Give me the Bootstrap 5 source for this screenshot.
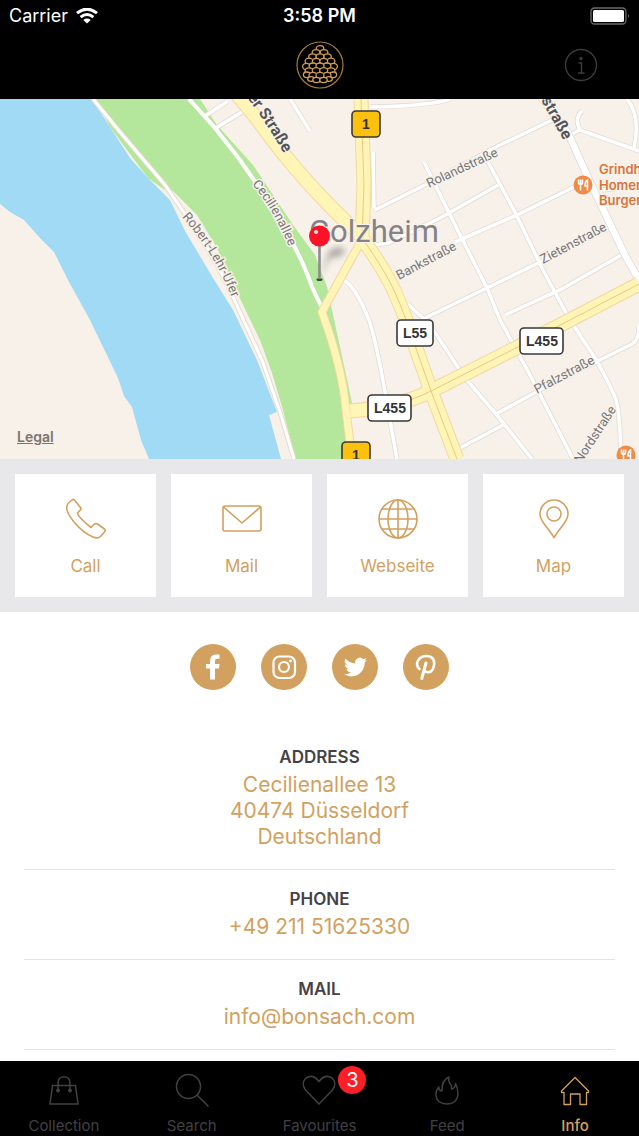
<!DOCTYPE html>
<html lang="en">
<head>
<meta charset="utf-8">
<meta name="viewport" content="width=device-width, initial-scale=1">
<title>Info</title>
<link href="https://cdn.jsdelivr.net/npm/bootstrap@5.3.0/dist/css/bootstrap.min.css" rel="stylesheet">
<style>
  :root { --gold: #d2a15f; --gold-line: #b98a49; --dim: #414044; }
  body { font-family: Inter, "Liberation Sans", sans-serif; }
  svg { display: block; }
  .status-bar { height: 32px; padding: 0 9px; font-size: 18px; line-height: 32px; }
  .status-bar > div, .title-bar > div { flex: 1 1 0; }
  .title-bar { height: 67px; padding: 0 41px 2px; }
  .plain-btn { background: none; border: 0; padding: 0; }
  .map-view .road-label { font: 13px Roboto, sans-serif; fill: #77757a; stroke: #f7f3ea; stroke-width: 3px; paint-order: stroke; }
  .map-view .major-label { font: bold 16px Roboto, sans-serif; fill: #555358; stroke: #f7f3ea; stroke-width: 2px; paint-order: stroke; }
  .map-view .district { font: 31px Roboto, sans-serif; fill: #858287; stroke: #f7f3ea; stroke-width: 2px; paint-order: stroke; }
  .map-view .poi { font: 600 13px Inter, sans-serif; fill: #d9753c; stroke: #f7f3ea; stroke-width: 2px; paint-order: stroke; }
  .map-view .shield { font: bold 14px "Liberation Sans Narrow", "Liberation Sans", sans-serif; fill: #333; text-anchor: middle; }
  .legal-link { left: 17px; bottom: 12px; font-size: 14px; line-height: 20px; font-weight: 600; color: #7b7570; }
  .action-strip { background: #e8e7e9; padding: 15px; gap: 15px; }
  .action-tile { flex: 1 1 0; height: 123px; background: #fff; color: var(--gold); text-decoration: none; font-size: 17px; line-height: 24px; padding-top: 24px; gap: 14px; }
  .social-row { gap: 25px; padding-top: 32px; padding-bottom: 55px; }
  .social-link { width: 46px; height: 46px; background: var(--gold); }
  .detail-list { padding: 0 24px 11px; }
  .detail { border-bottom: 1px solid #e3e2e5; padding: 17px 0 19px; }
  .detail:first-child { padding-top: 0; }
  .detail h2 { font-size: 17px; line-height: 24px; font-weight: 600; color: #444247; margin: 0 0 3px; }
  .detail address, .detail a { font-size: 21px; line-height: 26px; color: var(--gold); text-decoration: none; margin: 0; }
  .detail a { display: block; }
  .tab-strip { background: #000; height: 76px; }
  .tab-item { flex: 1 1 0; color: var(--dim); text-decoration: none; font-size: 15px; line-height: 20px; padding-top: 10px; gap: 5px; }
  .tab-item.current { color: var(--gold); font-weight: 500; }
  .count-dot { top: -5px; left: 39px; width: 28px; height: 28px; background: #fb1f28; font-size: 20px; line-height: 28px; }
</style>
</head>
<body class="d-flex flex-column min-vh-100 bg-white">

<header class="bg-black text-white">
  <div class="status-bar d-flex align-items-center">
    <div class="d-flex align-items-center gap-2">
      <span>Carrier</span>
      <svg width="22" height="16" viewBox="0 0 22 16" aria-hidden="true"><g fill="none" stroke="#fff" stroke-width="3"><path d="M1 5.2Q11-2.9 21 5.2"/><path d="M4.600 9.100Q11 4 17.400 9.100"/></g><path fill="#fff" d="M7.300 11.900Q11 9.200 14.700 11.900L11 15.500z"/></svg>
    </div>
    <div class="text-center fw-semibold">3:58 PM</div>
    <div class="d-flex justify-content-end">
      <svg width="40" height="18" viewBox="0 0 40 18" aria-hidden="true"><rect x="1" y="1" width="35" height="16" rx="3.500" fill="none" stroke="#6b6b6d" stroke-width="1.300"/><rect x="3" y="3" width="31" height="12" rx="1.500" fill="#fff"/><path d="M38 6.500v5q1.800-2.500 0-5" fill="#777"/></svg>
    </div>
  </div>
  <div class="title-bar d-flex align-items-center">
    <div></div>
    <svg width="48" height="48" viewBox="0 0 48 48" role="img" aria-label="Pine cone logo">
      <circle cx="24" cy="24" r="23" fill="none" stroke="#a57b3d" stroke-width="1.200"/>
      <g fill="#000" stroke="#d09d55" stroke-width="1.300">
        <ellipse cx="24" cy="7.500" rx="3.800" ry="2.800"/>
        <ellipse cx="20" cy="11.500" rx="3.800" ry="2.900"/><ellipse cx="28" cy="11.500" rx="3.800" ry="2.900"/>
        <ellipse cx="16.500" cy="15.800" rx="3.800" ry="3"/><ellipse cx="31.500" cy="15.800" rx="3.800" ry="3"/><ellipse cx="24" cy="15.800" rx="3.900" ry="3"/>
        <ellipse cx="13" cy="20.300" rx="3.900" ry="3.100"/><ellipse cx="35" cy="20.300" rx="3.900" ry="3.100"/><ellipse cx="20.300" cy="20.300" rx="3.900" ry="3"/><ellipse cx="27.700" cy="20.300" rx="3.900" ry="3"/>
        <ellipse cx="10.500" cy="25.500" rx="3.900" ry="3.200"/><ellipse cx="37.500" cy="25.500" rx="3.900" ry="3.200"/><ellipse cx="17" cy="25" rx="3.900" ry="3"/><ellipse cx="31" cy="25" rx="3.900" ry="3"/><ellipse cx="24" cy="25" rx="4" ry="3"/>
        <ellipse cx="13" cy="29.800" rx="3.900" ry="3"/><ellipse cx="35" cy="29.800" rx="3.900" ry="3"/><ellipse cx="20.300" cy="29.600" rx="4" ry="3"/><ellipse cx="27.700" cy="29.600" rx="4" ry="3"/>
        <ellipse cx="10.800" cy="33.800" rx="3.400" ry="2.800"/><ellipse cx="37.200" cy="33.800" rx="3.400" ry="2.800"/><ellipse cx="17" cy="34.300" rx="3.900" ry="3"/><ellipse cx="31" cy="34.300" rx="3.900" ry="3"/><ellipse cx="24" cy="34.300" rx="4" ry="3"/>
        <ellipse cx="15" cy="38" rx="3.300" ry="2.300"/><ellipse cx="33" cy="38" rx="3.300" ry="2.300"/><ellipse cx="20.500" cy="39" rx="3.700" ry="2.600"/><ellipse cx="27.500" cy="39" rx="3.700" ry="2.600"/>
      </g>
    </svg>
    <div class="d-flex justify-content-end">
      <button class="plain-btn" type="button" aria-label="Information">
        <svg width="34" height="34" viewBox="0 0 34 34" fill="none" stroke="#3d3b3e" stroke-width="1.400"><circle cx="17" cy="17" r="15.500"/><circle cx="17" cy="10.500" r="1" fill="#3d3b3e"/><path d="M14.500 15h3v10M14 25h6.500"/></svg>
      </button>
    </div>
  </div>
</header>

<main class="flex-grow-1">
  <section class="map-view position-relative" aria-label="Map">
    <svg class="w-100 h-auto" viewBox="0 99 639 360">
      <defs>
        <path id="minor" d="M375 210L425 185 500 145 552 120M375 245L388 243 440 218 500 184M424 162L455 225 487 288 500 320 530 375 573 459M488 162L516 214 543 270 570 320 595 358Q612 388 616 400T621 459M455 242L517 215 590 179M425 318L487 288 600 233M505 315L560 290 625 253M408 304L430 325 465 378 496 414 532 459M343 280Q355 285 369 320C379 350 386 400 397 459M460 448L503 425M496 414L540 390 632 344Q639 340 639 326M373 152L374 208M370 107Q430 106 450 99M205 116L228 101M216 128L250 107M290 99L310 131M570 135L580 130 639 151M580 130Q574 118 582 111M627 99Q641 116 634 148M603 190L620 188"/>
        <path id="yellow" d="M361 99L364 185 362 238M362 238C388 275 395 290 406 320L431 391 457 459M236 93L258 120Q300 180 361 236M350 411Q400 407 431 391L520 346 639 284"/>
        <path id="shore" d="M364 236L345 270 322 312Q343 370 346 411L352 459"/>
        <path id="l-robert" d="M182 217Q219 258 237 312"/>
        <path id="l-cec" d="M252 184Q276 213 291 252"/>
        <path id="l-left" d="M247 98Q268 124 292 168"/>
        <path id="l-right" d="M541 100L569 150"/>
      </defs>
      <rect y="99" width="639" height="360" fill="#f7f1e9"/>
      <path fill="#a0daf4" d="M0 99H92L110 127 130 158 148 178 170 200 185 231 213 278 233 310 257 360 277 412 269 415 281 459H149L141 440 132 407 124 396 118 378 90 320 68 280 54 252 40 238 24 220 10 212 0 204z"/>
      <path fill="#b4e69c" d="M95 99H200L217 125 253 165 293 225 315 255 327 287 340 347 352 403 347 459H295L283 410 272 373 260 340 235 288 217 248 197 215 173 191 165 190 148 178 130 154 110 127z"/>
      <use href="#minor" fill="none" stroke="#dedad5" stroke-width="5"/>
      <use href="#minor" fill="none" stroke="#fff" stroke-width="3.600"/>
      <path d="M93 99L120 132 165 185 187 217Q220 265 238 308L262 360 280 412 294 459" fill="none" stroke="#e6dcd0" stroke-width="5"/>
      <path d="M93 99L120 132 165 185 187 217Q220 265 238 308L262 360 280 412 294 459" fill="none" stroke="#fff" stroke-width="3"/>
      <path d="M189 99L215 128 240 160 256 183Q298 245 312 287L321 306" fill="none" stroke="#fff" stroke-width="4"/>
      <path d="M538 93L568 133 590 182 625 255 640 282" fill="none" stroke="#dedad5" stroke-width="8"/>
      <path d="M538 93L568 133 590 182 625 255 640 282" fill="none" stroke="#fff" stroke-width="6.500"/>
      <g fill="none"><use href="#yellow" stroke="#f3d8a0" stroke-width="15"/><use href="#shore" stroke="#f3d8a0" stroke-width="9"/><use href="#yellow" stroke="#fff5b6" stroke-width="13"/><use href="#shore" stroke="#fff5b6" stroke-width="7"/></g>
      <path d="M361 99L364 185 362 238M362 238C388 275 395 290 406 320L431 391 457 459M380 408Q410 402 431 391L520 346 639 284" fill="none" stroke="#f1c77e" stroke-width="1"/>

      <text class="district" x="309" y="242">Golzheim</text>
      <text class="road-label" transform="rotate(-25 429 188)" x="429" y="188">Rolandstraße</text>
      <text class="road-label" transform="rotate(-28 399 280)" x="399" y="280">Bankstraße</text>
      <text class="road-label" transform="rotate(-28 543 264)" x="543" y="264">Zietenstraße</text>
      <text class="road-label" transform="rotate(-28 537 394)" x="537" y="394">Pfalzstraße</text>
      <text class="road-label" transform="rotate(-57 581 464)" x="581" y="464">Nordstraße</text>
      <text class="road-label"><textPath href="#l-robert">Robert-Lehr-Ufer</textPath></text>
      <text class="road-label"><textPath href="#l-cec">Cecilienallee</textPath></text>
      <text class="major-label"><textPath href="#l-left">er Straße</textPath></text>
      <text class="major-label"><textPath href="#l-right">straße</textPath></text>
      <text class="poi" x="599" y="174">Grindhouse</text>
      <text class="poi" x="599" y="190">Homemade</text>
      <text class="poi" x="599" y="205">Burgers</text>
      <g id="food"><circle cx="583" cy="185" r="9.500" fill="#f08b48"/><path d="M578.500 179.500v3q0 2 2 2t2-2v-3M580.500 179.500V190.500M587.500 190.500V180q-2.500 1.500-2.500 6h2.500" fill="none" stroke="#fff" stroke-width="1.500"/></g>
      <use href="#food" x="43" y="270"/>

      <g stroke="#3a3838" stroke-width="1.600">
        <rect x="352" y="111" width="28" height="26" rx="4" fill="#fcc00f"/><rect x="342" y="442" width="28" height="26" rx="4" fill="#fcc00f"/>
        <rect x="397" y="320" width="36" height="26" rx="4" fill="#fff"/><rect x="520" y="328" width="43" height="26" rx="4" fill="#fff"/><rect x="368" y="395" width="43" height="26" rx="4" fill="#fff"/>
      </g>
      <text class="shield" x="366" y="129">1</text>
      <text class="shield" x="356" y="460">1</text>
      <text class="shield" x="415" y="338">L55</text>
      <text class="shield" x="542" y="346">L455</text>
      <text class="shield" x="390" y="413">L455</text>

      <defs><filter id="soft"><feGaussianBlur stdDeviation="3"/></filter></defs>
      <path d="M320 278L328 253Q335 244 345 249 344 258 330 258z" fill="#555" opacity=".45" filter="url(#soft)"/>
      <ellipse cx="319.500" cy="279.500" rx="3" ry="1.500" fill="#3f4a3a"/>
      <path d="M319.500 244V279" stroke="#8d8d90" stroke-width="2.600"/>
      <circle cx="319.500" cy="236" r="10.500" fill="#fb1428"/><circle cx="316" cy="232" r="2" fill="#ffe6e6"/>
    </svg>
    <a class="legal-link position-absolute" href="#legal">Legal</a>
  </section>

  <nav class="action-strip d-flex" aria-label="Contact">
    <a class="action-tile d-flex flex-column align-items-center" href="tel:+4921151625330">
      <svg width="42" height="42" viewBox="0 0 42 42" fill="none" stroke="currentColor" stroke-width="1.600" stroke-linejoin="round"><path d="M9 1.500L15.500 9.500Q16.500 11 15 12.300L12.500 15Q12.500 17 17 21.500T26 29.500L29.500 26Q31 25 32.500 26L39.500 31Q41 32.500 39.500 34L35.500 38.500Q33 41 28 39Q17.500 34.500 9 24T2 8.500Q2 6.500 3.500 5L7 2Q8 1 9 1.500z"/></svg>
      <span>Call</span></a>
    <a class="action-tile d-flex flex-column align-items-center" href="mailto:info@bonsach.com">
      <svg width="42" height="42" viewBox="0 0 42 42" fill="none" stroke="currentColor" stroke-width="1.600" stroke-linejoin="round"><rect x="2" y="8" width="38" height="25" rx="2"/><path d="M2.500 9L21 25 39.500 9"/></svg>
      <span>Mail</span></a>
    <a class="action-tile d-flex flex-column align-items-center" href="#web">
      <svg width="42" height="42" viewBox="0 0 42 42" fill="none" stroke="currentColor" stroke-width="1.600"><circle cx="21" cy="21" r="19"/><ellipse cx="21" cy="21" rx="10" ry="19"/><path d="M21 2V40M2 21H40M5 11H37M5 31H37"/></svg>
      <span>Webseite</span></a>
    <a class="action-tile d-flex flex-column align-items-center" href="#map">
      <svg width="42" height="42" viewBox="0 0 42 42" fill="none" stroke="currentColor" stroke-width="1.600"><path d="M21 39.500Q17.500 34 13.500 29Q7 21 7 16A14 14 0 0 1 35 16Q35 21 28.500 29Q24.500 34 21 39.500z"/><circle cx="21" cy="16" r="7"/></svg>
      <span>Map</span></a>
  </nav>

  <div class="social-row d-flex justify-content-center">
    <a class="social-link rounded-circle" href="#facebook" aria-label="Facebook"><svg width="46" height="46" viewBox="0 0 46 46"><path fill="#fff" d="M20 35.500V24.500H16V20H20V17Q20 10.500 26 10.500H29.500V14.800H27Q25 14.800 25 17V20H29.500L29 24.500H25V35.500z"/></svg></a>
    <a class="social-link rounded-circle" href="#instagram" aria-label="Instagram"><svg width="46" height="46" viewBox="0 0 46 46" fill="none" stroke="#fff" stroke-width="2.200"><rect x="12.500" y="12.500" width="21.500" height="21.500" rx="6"/><circle cx="23" cy="23" r="5"/><circle cx="29.500" cy="17" r="1.400" fill="#fff" stroke="none"/></svg></a>
    <a class="social-link rounded-circle" href="#twitter" aria-label="Twitter"><svg width="46" height="46" viewBox="0 0 46 46"><path fill="#fff" transform="translate(12 11.500) scale(.96)" d="M23.950 4.570a10 10 0 0 1-2.820.77 4.960 4.960 0 0 0 2.160-2.720 9.900 9.900 0 0 1-3.120 1.190 4.920 4.920 0 0 0-8.380 4.480A13.930 13.930 0 0 1 1.640 3.160a4.920 4.920 0 0 0 1.520 6.570 4.900 4.900 0 0 1-2.230-.61v.06a4.920 4.920 0 0 0 3.950 4.830 5 5 0 0 1-2.210.08 4.940 4.940 0 0 0 4.600 3.420A9.870 9.870 0 0 1 0 19.540a13.990 13.990 0 0 0 7.550 2.210c9.050 0 14-7.500 14-13.980 0-.21 0-.42-.02-.63a9.940 9.940 0 0 0 2.460-2.550z"/></svg></a>
    <a class="social-link rounded-circle" href="#pinterest" aria-label="Pinterest"><svg width="46" height="46" viewBox="0 0 46 46" fill="none" stroke="#fff" stroke-width="2.600" stroke-linecap="round"><path d="M16.500 25Q12.500 21.500 15 16.500Q18 11.800 24 12Q31 12.500 31.200 19Q31 27.500 25.500 28.300Q22.500 28.500 21.300 26"/><path d="M23 19L18.800 34.500" stroke-width="3"/></svg></a>
  </div>

  <div class="detail-list text-center">
    <section class="detail"><h2>ADDRESS</h2><address>Cecilienallee 13<br>40474 Düsseldorf<br>Deutschland</address></section>
    <section class="detail"><h2>PHONE</h2><a href="tel:+4921151625330">+49 211 51625330</a></section>
    <section class="detail"><h2>MAIL</h2><a href="mailto:info@bonsach.com">info@bonsach.com</a></section>
  </div>
</main>

<nav class="tab-strip d-flex sticky-bottom" aria-label="Main">
  <a class="tab-item d-flex flex-column align-items-center" href="#collection">
    <svg width="40" height="40" viewBox="0 0 40 40" fill="none" stroke="currentColor" stroke-width="1.500"><path d="M8.500 14.500H31.500L34 33H6z"/><path d="M14 19.500V12Q14 6 20 6T26 12V19.500"/><circle cx="14" cy="19.500" r="1.200" fill="currentColor"/><circle cx="26" cy="19.500" r="1.200" fill="currentColor"/></svg>
    <span>Collection</span></a>
  <a class="tab-item d-flex flex-column align-items-center" href="#search">
    <svg width="40" height="40" viewBox="0 0 40 40" fill="none" stroke="currentColor" stroke-width="1.500"><circle cx="16.500" cy="15.500" r="12"/><path d="M25 24L36.500 35.500"/></svg>
    <span>Search</span></a>
  <a class="tab-item d-flex flex-column align-items-center" href="#favourites">
    <span class="position-relative"><svg width="40" height="40" viewBox="0 0 40 40" fill="none" stroke="currentColor" stroke-width="1.500"><path d="M20 33L6.500 19Q1.500 12 7 7Q14 2.500 20 10.500Q26 2.500 33 7Q38.500 12 33.500 19z"/></svg><span class="count-dot position-absolute rounded-circle text-white text-center">3</span></span>
    <span>Favourites</span></a>
  <a class="tab-item d-flex flex-column align-items-center" href="#feed">
    <svg width="40" height="40" viewBox="0 0 40 40" fill="none" stroke="currentColor" stroke-width="1.500" stroke-linejoin="round"><path d="M22 6Q14.500 9 15 20Q11.500 19.500 11.800 16Q8.500 20 9 24.500Q10 33 20 33T31 23.500Q31 17 28.500 12.500Q28.500 17 24.500 18Q25 14 22.500 12Q21 9 22 6z"/></svg>
    <span>Feed</span></a>
  <a class="tab-item current d-flex flex-column align-items-center" href="#info" aria-current="page">
    <svg width="40" height="40" viewBox="0 0 40 40" fill="none" stroke="currentColor" stroke-width="1.300" stroke-linejoin="round"><path d="M6.500 20L20 6.500 33.500 20V21.500H31.500V33.500H25V23H15.500V33.500H9V21.500H6.500z"/></svg>
    <span>Info</span></a>
</nav>

<script src="https://cdn.jsdelivr.net/npm/bootstrap@5.3.0/dist/js/bootstrap.bundle.min.js"></script>
</body>
</html>
